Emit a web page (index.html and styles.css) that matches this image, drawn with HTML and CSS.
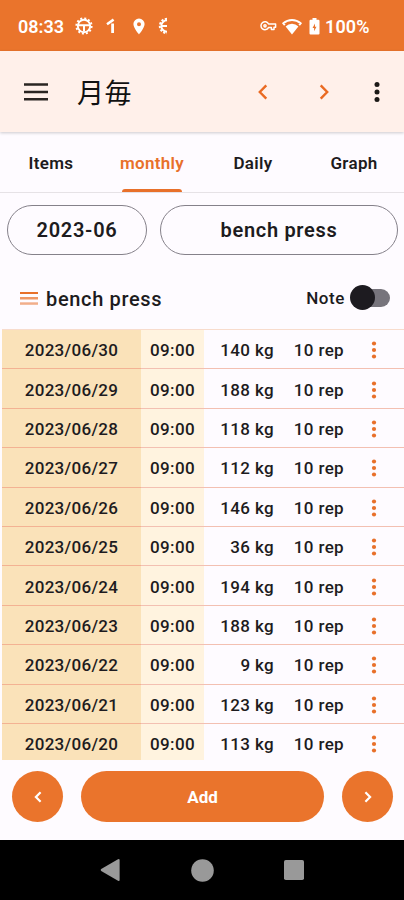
FILE: index.html
```
<!DOCTYPE html>
<html lang="ja">
<head>
<meta charset="utf-8">
<title>月毎</title>
<link rel="stylesheet" href="styles.css">
</head>
<body>
<div class="status">
  <span class="clock">08:33</span>
  <svg class="s-gear" width="20" height="20" viewBox="0 0 20 20" fill="none" stroke="#fff"><circle cx="10" cy="10" r="7.6" stroke-width="2" stroke-dasharray="2 1.98"/><circle cx="10" cy="10" r="6.2" stroke-width="1.9"/><path d="M4 9.300h12M10 9.500v6" stroke-width="2"/></svg>
  <svg class="s-one" width="10" height="16" viewBox="0 0 10 16" fill="none" stroke="#fff"><path d="M6.600 5.500V15" stroke-width="2.800"/><path d="M1 6.200L7.600 1.600" stroke-width="2.500"/></svg>
  <svg class="s-pin" width="12" height="17" viewBox="0 0 12 17"><path fill="#fff" fill-rule="evenodd" d="M6 .5A5.600 5.600 0 0 0 .4 6.100C.4 10 6 16.500 6 16.500S11.600 10 11.600 6.100A5.600 5.600 0 0 0 6 .5zM6 4.200a2 2 0 1 1 0 4 2 2 0 0 1 0-4z"/></svg>
  <svg class="s-half" width="10" height="18" viewBox="0 0 10 18" fill="none" stroke="#fff"><path d="M9 1.800A7.200 7.200 0 0 0 9 16.200" stroke-width="2" stroke-dasharray="2.200 1.500"/><path d="M9 3.300A5.700 5.700 0 0 0 9 14.700M4 9h5" stroke-width="1.900"/></svg>
  <svg class="s-key" width="17" height="12" viewBox="0 0 17 12" fill="none" stroke="#fff" stroke-width="1.500"><path d="M8.600 4H15.600V7.200H14V9.400H11.400V7.400H8.600A4 4 0 1 1 8.600 4z" stroke-linejoin="round"/><circle cx="5" cy="5.800" r="1.100"/></svg>
  <svg class="s-wifi" width="20" height="17" viewBox="0 0 20 17"><path fill="#fff" d="M10 16.500L3.600 8.400a9.200 9.200 0 0 1 12.800 0z"/><path d="M2.800 7.200L1.300 5.300a13 13 0 0 1 17.400 0L17.200 7.200" fill="none" stroke="#fff" stroke-width="1.900"/></svg>
  <svg class="s-bat" width="11" height="17" viewBox="0 0 11 17"><path fill="#fff" d="M3.500 0h4v1.800H9.500Q10.500 1.800 10.500 3v12.500Q10.500 16.500 9.500 16.500H1.500Q.5 16.500.5 15.500V3Q.5 1.800 1.500 1.800h2z"/><path fill="#ea742c" d="M6 5.500L3.500 10h1.600v3.200L7.500 8.800H6z"/></svg>
  <span class="pct">100%</span>
</div>
<header class="bar">
  <svg class="menu" width="24" height="18" viewBox="0 0 24 18" stroke="#2a2522" stroke-width="2.400"><path d="M0 1.500h24M0 9h24M0 16.200h24"/></svg>
  <h1>月毎</h1>
  <svg class="prev" width="10" height="16" viewBox="0 0 10 16" fill="none" stroke="#ea6a22" stroke-width="2.400"><path d="M8.300 1.400L1.800 8l6.500 6.600"/></svg>
  <svg class="next" width="10" height="16" viewBox="0 0 10 16" fill="none" stroke="#ea6a22" stroke-width="2.400"><path d="M1.700 1.400L8.200 8l-6.500 6.600"/></svg>
  <svg class="more" width="6" height="22" viewBox="0 0 6 22" fill="#1c1917"><circle cx="3" cy="3.500" r="2.500"/><circle cx="3" cy="11" r="2.500"/><circle cx="3" cy="18.500" r="2.500"/></svg>
</header>
<nav class="tabs">
  <a><span>Items</span></a><a class="on"><span>monthly</span></a><a><span>Daily</span></a><a><span>Graph</span></a>
</nav>
<div class="filters"><button>2023-06</button><button>bench press</button></div>
<div class="caption">
  <svg width="18" height="13" viewBox="0 0 18 13" fill="#e8702a"><path d="M0 0h18v2H0z"/><path d="M0 5h18v2.500H0z" opacity=".72"/><path d="M0 10.300h18v2.500H0z" opacity=".55"/></svg>
  <h2>bench press</h2><span class="note">Note</span><i class="switch"></i>
</div>
<main id="rows"></main>
<footer class="actions">
  <button class="round"><svg width="8" height="12" viewBox="0 0 8 12" fill="none" stroke="#fff" stroke-width="2.200"><path d="M6.600 1.200L1.900 6l4.700 4.800"/></svg></button>
  <button class="add">Add</button>
  <button class="round"><svg width="8" height="12" viewBox="0 0 8 12" fill="none" stroke="#fff" stroke-width="2.200"><path d="M1.400 1.200L6.100 6l-4.700 4.800"/></svg></button>
</footer>
<div class="sysnav">
  <svg width="20" height="24" viewBox="0 0 20 24" fill="#999"><path d="M1.200 11L18 1.200Q19.600.5 19.600 2v20Q19.600 23.500 18 22.700L1.200 13Q0 12 1.200 11z"/></svg>
  <svg width="23" height="23" viewBox="0 0 23 23" fill="#999"><circle cx="11.500" cy="11.500" r="11.300"/></svg>
  <svg width="20" height="20" viewBox="0 0 20 20" fill="#999"><rect width="20" height="20" rx="1.800"/></svg>
</div>
<script src="rows.js"></script>
</body>
</html>
```
FILE: styles.css
```
* { box-sizing: border-box; }
body { margin: 0; width: 404px; height: 900px; overflow: hidden; background: #fefbff; color: #1d1b20; font-family: Roboto, "Noto Sans CJK JP", sans-serif; font-weight: 500; display: flex; flex-direction: column; }
svg { display: block; flex: none; }
button { font: inherit; color: inherit; padding: 0; }
h1, h2 { margin: 0; font-weight: 500; }
.status { height: 51px; flex: none; background: #ea742c; color: #fff; display: flex; align-items: center; padding: 1px 0 0 18px; font-size: 18px; font-weight: 600; }
.clock { width: 56px; letter-spacing: 0; }
.s-one { margin-left: 12px; }
.s-pin { margin-left: 17px; }
.s-half { margin-left: 13px; }
.s-key { margin-left: 92px; }
.s-wifi { margin-left: 5px; }
.s-bat { margin-left: 7px; }
.pct { margin-left: 5px; letter-spacing: .1px; }
.bar { height: 81px; flex: none; background: #fff0ea; display: flex; align-items: center; padding-left: 24px; box-shadow: 0 1px 3px #0003; position: relative; }
.bar h1 { font-family: "Noto Sans CJK JP", sans-serif; font-size: 27px; font-weight: 400; line-height: 40px; margin-left: 29px; width: 153px; letter-spacing: .5px; color: #111; }
.prev { margin-left: 28px; }
.next { margin-left: 51px; }
.more { margin-left: 45px; }
.tabs { height: 61px; flex: none; display: grid; grid-template-columns: repeat(4, 1fr); border-bottom: 1px solid #e6e2e6; font-size: 17px; letter-spacing: .3px; font-weight: 600; }
.tabs a { display: flex; justify-content: center; align-items: center; padding: 2px 0 0 1px; position: relative; }
.tabs .on { color: #e8702a; }
.tabs .on::after { content: ""; position: absolute; bottom: 0; left: 21px; width: 60px; height: 3px; border-radius: 3px 3px 0 0; background: #e8702a; }
.filters { display: flex; gap: 13px; padding: 12px 6px 0 7px; flex: none; }
.filters button { height: 50px; width: 140px; border: 1px solid #85818a; border-radius: 25px; background: none; font-size: 20px; letter-spacing: .7px; font-weight: 600; }
.filters button + button { flex: 1; }
.caption { height: 74px; flex: none; display: flex; align-items: center; padding: 12px 14px 0 20px; }
.caption h2 { font-size: 20px; letter-spacing: .65px; margin-left: 8px; padding-top: 1px; flex: 1; }
.note { font-size: 17px; letter-spacing: .6px; margin-right: 5px; }
.switch { width: 40px; height: 26px; display: flex; align-items: center; position: relative; }
.switch::before { content: ""; width: 34px; height: 18px; margin-left: 6px; border-radius: 9px; background: #77747c; }
.switch::after { content: ""; position: absolute; left: 0; top: 0; width: 25px; height: 25px; border-radius: 50%; background: #1d1b20; }
#rows { height: 431px; flex: none; overflow: hidden; margin-left: 2px; }
.row { height: 39.4px; display: grid; grid-template-columns: 139px 63px 70px 70px 60px; border-top: 1px solid #f3c0b2; align-items: stretch; font-size: 17px; letter-spacing: .35px; background: linear-gradient(90deg, #fae2b9 139px, #fff3df 139px 202px, transparent 202px); }
.row:first-child { border-top-color: #f8dccd; }
.row > * { display: flex; align-items: center; padding-top: 2px; }
.date, .time { justify-content: center; }
.date { letter-spacing: .3px; }
.weight, .reps { justify-content: flex-end; }
.row + .row .date { box-shadow: 0 -1px #f3b293; }
.dots { justify-content: center; }
.actions { height: 80px; flex: none; display: flex; align-items: flex-start; padding: 11px 11px 0 12px; gap: 18px; }
.actions button { height: 51px; border: 0; border-radius: 26px; background: #ea742c; color: #fff; }
.round { width: 51px; display: flex; align-items: center; justify-content: center; }
.add { flex: 1; font-size: 17px; font-weight: 700 !important; }
.sysnav { height: 60px; flex: none; background: #000; display: flex; align-items: center; justify-content: space-between; padding: 0 100px; }
```
FILE: rows.js
```
const weights = [140, 188, 118, 112, 146, 36, 194, 188, 9, 123, 113];
document.getElementById("rows").innerHTML = weights.map((kg, i) => `
  <div class="row"><span class="date">2023/06/${30 - i}</span><span class="time">09:00</span>
  <span class="weight">${kg} kg</span><span class="reps">10 rep</span>
  <span class="dots"><svg width="6" height="20" viewBox="0 0 6 20" fill="#e8702a"><circle cx="3" cy="3.500" r="2.100"/><circle cx="3" cy="10" r="2.100"/><circle cx="3" cy="16.500" r="2.100"/></svg></span></div>`).join("");
```
